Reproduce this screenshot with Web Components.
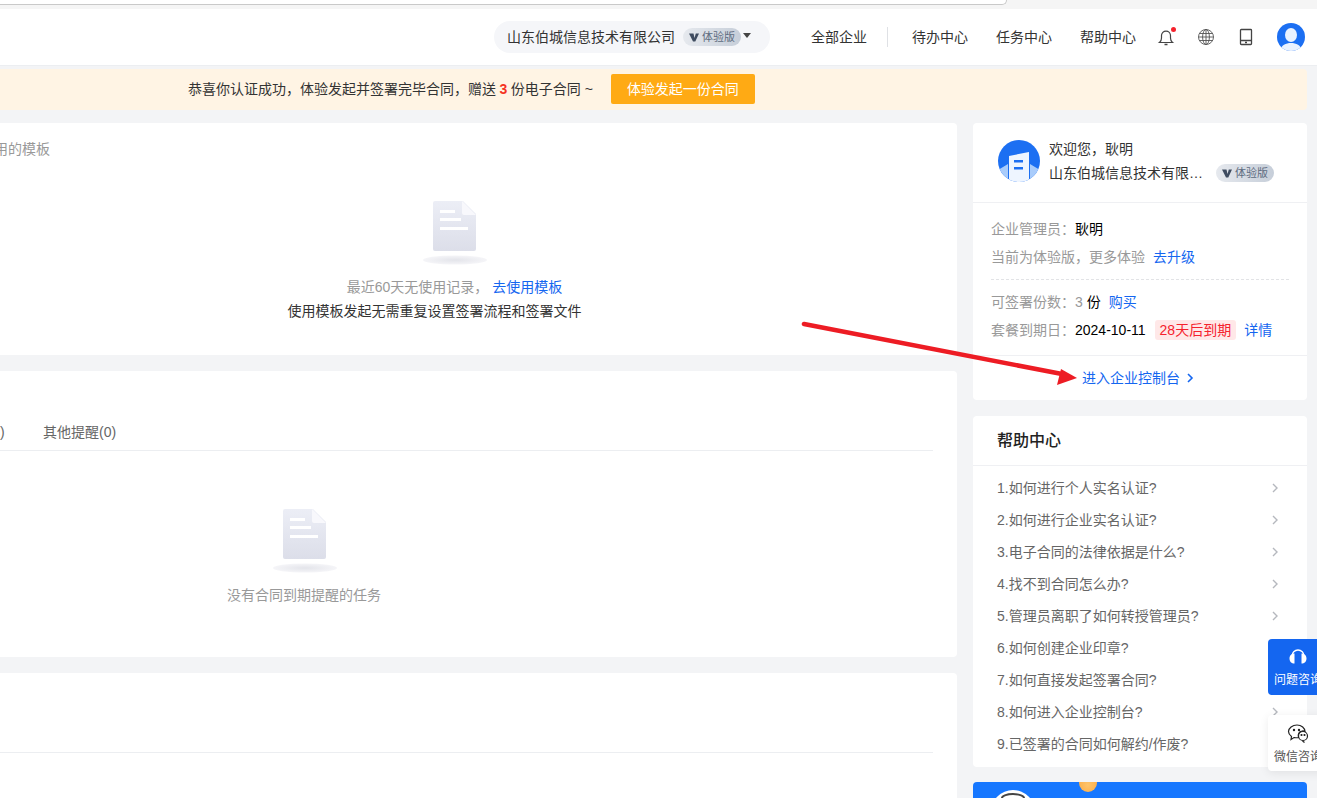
<!DOCTYPE html>
<html lang="zh"><head><meta charset="utf-8"><title>控制台</title>
<style>
html,body{margin:0;height:798px;overflow:hidden;background:#f3f4f6;font:14px/20px "Liberation Sans","Noto Sans CJK SC",sans-serif;color:#333}
.columns{display:grid;grid-template-columns:957px 334px;column-gap:16px;margin-top:13px;height:675px;overflow:hidden}
.col{display:flex;flex-direction:column;gap:16px;min-width:0}
</style></head><body>
<browser-strip></browser-strip>
<top-bar></top-bar>
<promo-banner></promo-banner>
<div class="columns">
  <div class="col">
    <template-card></template-card>
    <remind-card></remind-card>
    <blank-card></blank-card>
  </div>
  <div class="col">
    <account-card></account-card>
    <help-card></help-card>
    <promo-card></promo-card>
  </div>
</div>
<float-actions></float-actions>
<red-arrow></red-arrow>
<script>
const def=(name,html)=>customElements.define(name,class extends HTMLElement{
  constructor(){super();this.attachShadow({mode:'open'}).innerHTML=html}
});
const chevron=(c,w=1.4)=>`<svg width="8" height="10" viewBox="0 0 8 10" fill="none" stroke="${c}" stroke-width="${w}"><path d="M2 1l4 4-4 4"/></svg>`;

def('edition-tag',`<style>
:host{display:inline-flex;align-items:center;justify-content:center;gap:3px;width:58px;height:18px;border-radius:9px;background:linear-gradient(90deg,#e6e9ee,#c6ced9);color:#5d6b80;font-size:11px;line-height:18px;flex:none}
svg{display:block}
</style><svg width="10" height="9" viewBox="0 0 10 9"><path d="M0 .5h4.500L5.500 5 6.800.5H10L6.300 8.600H4z" fill="#3f4c60"/></svg><span>体验版</span>`);

def('browser-strip',`<style>
:host{display:block;height:9px;background:#f5f5f5;overflow:hidden}
div{width:1006px;height:4px;background:#fff;border:solid #c9c9c9;border-width:0 1px 1px 0;border-radius:0 0 10px 0}
</style><div></div>`);

def('top-bar',`<style>
:host{display:flex;align-items:center;height:56px;background:#fff;border-bottom:1px solid #eceef1;box-sizing:content-box;padding-right:12px;justify-content:flex-end;color:#333}
.org{display:flex;align-items:center;width:276px;height:32px;box-sizing:border-box;padding-left:13px;border-radius:16px;background:#f5f6f9;margin-right:41px}
.org edition-tag{margin-left:8px}
.caret{width:0;height:0;border:4px solid transparent;border-top:5px solid #444;border-bottom:0;margin-left:2px;margin-top:-3px}
a{color:#333;text-decoration:none}
.sep{width:1px;height:20px;background:#dfe1e5;margin:0 24px 0 20px}
.nav{margin-right:28px}
.nav.last{margin-right:21px}
.ic{display:flex;width:18px;height:18px;margin-right:22px;position:relative}
.dot{position:absolute;right:-1px;top:-1px;width:5px;height:5px;border-radius:50%;background:#f5222d}
.me{display:block}
</style>
<div class="org"><span>山东伯城信息技术有限公司</span><edition-tag></edition-tag><i class="caret"></i></div>
<a>全部企业</a><i class="sep"></i>
<a class="nav">待办中心</a><a class="nav">任务中心</a><a class="nav last">帮助中心</a>
<span class="ic"><svg width="18" height="18" viewBox="0 0 18 18" fill="none" stroke="#444" stroke-width="1.2"><path d="M2.500 14.500c1.300-1 2-2.300 2-4.500V7.600a4.500 4.500 0 0 1 9 0V10c0 2.200.7 3.500 2 4.500z"/><path d="M7.500 16.500h3" stroke-width="1.500"/></svg><i class="dot"></i></span>
<span class="ic"><svg width="18" height="18" viewBox="0 0 18 18" fill="none" stroke="#555" stroke-width=".9"><circle cx="9" cy="9" r="7.500"/><ellipse cx="9" cy="9" rx="3.400" ry="7.500"/><path d="M9 1.500v15M1.500 9h15M2.600 5.500h12.800M2.600 12.500h12.800"/></svg></span>
<span class="ic"><svg width="18" height="18" viewBox="0 0 18 18" fill="none" stroke="#444" stroke-width="1.3"><rect x="3.500" y="1.500" width="11" height="15" rx=".8"/><path d="M3.500 12.500h11M8 14.500h2"/></svg></span>
<svg class="me" width="28" height="28" viewBox="0 0 28 28"><defs><clipPath id="c"><circle cx="14" cy="14" r="14"/></clipPath></defs><g clip-path="url(#c)"><rect width="28" height="28" fill="#1c6ff2"/><ellipse cx="14" cy="12" rx="6" ry="7" fill="#eaf2ff"/><path d="M3 28c1-6 6-8 11-8s10 2 11 8z" fill="#eaf2ff"/></g></svg>`);

def('promo-banner',`<style>
:host{display:flex;align-items:center;height:41px;margin:3px 10px 0 0;background:#fff4e4;border-radius:0 4px 4px 0;padding:0 0 1px 188px;box-sizing:border-box;color:#333}
b{color:#f5331f;margin:0 3.500px;font-weight:700}
button{all:unset;width:144px;height:30px;margin-left:18px;background:#ffaa14;color:#fff;border-radius:2px;text-align:center;line-height:30px;font-size:14px}
</style><span>恭喜你认证成功，体验发起并签署完毕合同，赠送<b>3</b>份电子合同 ~</span><button>体验发起一份合同</button>`);

const docIcon=`<svg width="64" height="64" viewBox="0 0 64 64" style="display:block"><defs><linearGradient id="g" x1="0" y1="0" x2="0" y2="1"><stop offset="0" stop-color="#eceef6"/><stop offset="1" stop-color="#dcdee9"/></linearGradient><radialGradient id="s"><stop offset="0" stop-color="#e3e4ea"/><stop offset="1" stop-color="#f5f5f8"/></radialGradient></defs><path d="M10 2a2 2 0 0 1 2-2h28l13 13v35a2 2 0 0 1-2 2H12a2 2 0 0 1-2-2z" fill="url(#g)"/><path d="M39 0l14 14H41a2 2 0 0 1-2-2z" fill="#f8f8fc"/><rect x="17" y="9" width="15" height="3" fill="#fff"/><rect x="17" y="17" width="21" height="3" fill="#fff"/><rect x="17" y="26" width="28" height="3" fill="#fff"/><ellipse cx="32" cy="59" rx="32" ry="4.500" fill="url(#s)"/></svg>`;

def('template-card',`<style>
:host{display:block;height:232px;background:#fff;border-radius:0 4px 4px 0;box-sizing:border-box;padding-top:16px;overflow:hidden}
.t{margin-left:-6px;color:#999;white-space:nowrap}
.e{width:869px;display:flex;flex-direction:column;align-items:center;margin-top:42px}
.i{margin-left:40px;margin-bottom:10px}
.l{line-height:24px}
.o{margin-left:40px}
.g{color:#999}.k{color:#1466f0;margin-left:4px}
</style><div class="t">用的模板</div><div class="e"><div class="i">${docIcon}</div><div class="l o"><span class="g">最近60天无使用记录，</span><span class="k">去使用模板</span></div><div class="l">使用模板发起无需重复设置签署流程和签署文件</div></div>`);

def('remind-card',`<style>
:host{display:block;height:286px;background:#fff;border-radius:0 4px 4px 0;box-sizing:border-box;padding:51px 24px 0 0;overflow:hidden}
.tabs{display:flex;height:28px;border-bottom:1px solid #eceef1;color:#666;white-space:nowrap}
.tabs span:first-child{width:43px}
.e{width:608px;display:flex;flex-direction:column;align-items:center;margin-top:58px}
.i{margin-bottom:12px;margin-left:2px}
.g{color:#999;line-height:20px}
</style><div class="tabs"><span>)</span><span>其他提醒(0)</span></div><div class="e"><div class="i">${docIcon}</div><div class="g">没有合同到期提醒的任务</div></div>`);

def('blank-card',`<style>
:host{display:block;height:200px;background:#fff;border-radius:0 4px 4px 0;box-sizing:border-box;padding:79px 24px 0 0}
div{border-bottom:1px solid #eceef1}
</style><div></div>`);

def('account-card',`<style>
:host{display:block;height:277px;background:#fff;border-radius:4px;overflow:hidden}
.h{display:flex;gap:9px;height:80px;box-sizing:border-box;padding:14px 0 0 25px;border-bottom:1px solid #eff0f3}
.h svg{margin-top:3px;flex:none}
.h .n{line-height:24px;width:225px}
.c{display:flex;align-items:center}
.c span{width:167px;white-space:nowrap}
.b{padding:12px 18px 0;height:152px;box-sizing:border-box}
.r{height:28px;line-height:28px;color:#999;display:flex;align-items:center;white-space:nowrap}
.k{color:#000}
.a{color:#1466f0}
.m{margin-left:8px}
.dash{border-top:1px dashed #e2e3e6;margin:8px 0}
.tag{background:#ffe8e8;color:#f5222d;border-radius:3px;height:20px;line-height:20px;padding:0 5px;margin:0 8px 0 9px}
.f{display:flex;align-items:center;gap:6px;height:44px;padding-left:109px;border-top:1px solid #eff0f3;color:#1466f0}
</style>
<div class="h"><svg width="42" height="42" viewBox="0 0 42 42"><defs><clipPath id="a"><circle cx="21" cy="21" r="21"/></clipPath></defs><g clip-path="url(#a)"><rect width="42" height="42" fill="#1c6ff2"/><path d="M0 30l10-6v18H0zM42 30l-10-6v18h10z" fill="#a9ccfb"/><path d="M11 16l20-4v30H11z" fill="#eef5ff"/><rect x="16" y="20" width="9" height="2.500" fill="#1c6ff2"/><rect x="16" y="27" width="9" height="2.500" fill="#1c6ff2"/></g></svg>
<div class="n"><div>欢迎您，耿明</div><div class="c"><span>山东伯城信息技术有限…</span><edition-tag></edition-tag></div></div></div>
<div class="b">
<div class="r">企业管理员：<span class="k">耿明</span></div>
<div class="r">当前为体验版，更多体验<span class="a m">去升级</span></div>
<div class="dash"></div>
<div class="r">可签署份数：3&nbsp;<span class="k">份</span><span class="a m">购买</span></div>
<div class="r">套餐到期日：<span class="k">2024-10-11</span><span class="tag">28天后到期</span><span class="a">详情</span></div>
</div>
<div class="f"><span>进入企业控制台</span>${chevron('#1466f0',1.6)}</div>`);

const q=['1.如何进行个人实名认证?','2.如何进行企业实名认证?','3.电子合同的法律依据是什么?','4.找不到合同怎么办?','5.管理员离职了如何转授管理员?','6.如何创建企业印章?','7.如何直接发起签署合同?','8.如何进入企业控制台?','9.已签署的合同如何解约/作废?'];
def('help-card',`<style>
:host{display:block;height:351px;background:#fff;border-radius:4px;overflow:hidden}
.t{height:49px;line-height:49px;padding-left:24px;font-size:16px;color:#222;border-bottom:1px solid #eff0f3;font-weight:500}
ul{list-style:none;margin:6px 0 0;padding:0 28px 0 24px}
li{display:flex;justify-content:space-between;align-items:center;height:32px;color:#666}
</style><div class="t">帮助中心</div><ul>${q.map(x=>`<li><span>${x}</span>${chevron('#b5b8be')}</li>`).join('')}</ul>`);

def('promo-card',`<style>
:host{display:block;height:80px;margin-top:-1px;background:#1677ff;border-radius:4px 4px 0 0;position:relative;overflow:hidden}
i{position:absolute;border-radius:50%}
.coin{left:106px;top:-8px;width:18px;height:18px;background:radial-gradient(circle at 50% 60%,#ffc46a,#f9a63f)}
.w{left:18px;top:8px;width:44px;height:44px;background:#fff;overflow:hidden}
.w::after{content:"";position:absolute;left:10px;top:3px;width:24px;height:10px;border:2px solid #444;border-radius:50%;box-sizing:border-box}
</style><i class="coin"></i><i class="w"></i>`);

def('float-actions',`<style>
:host{position:absolute;left:1268px;top:639px;width:49px;overflow:hidden;padding:0 0 10px 10px;margin-left:-10px;display:flex;flex-direction:column;gap:20px;font-size:12px;line-height:16px;white-space:nowrap}
div{height:56px;width:60px;border-radius:4px 0 0 4px;box-sizing:border-box;padding:10px 0 0 6px;display:flex;flex-direction:column}
svg{display:block;margin-left:14px;margin-bottom:4px}
.w svg{margin-left:13px;margin-bottom:5px;margin-top:-1px}
.b{background:#1466f0;color:#fff}
.w{background:#fff;color:#555;box-shadow:0 2px 10px rgba(0,0,0,.08)}
</style>
<div class="b"><svg width="20" height="19" viewBox="0 0 20 19" fill="none"><path d="M4 9V7a6 6 0 0 1 12 0v2" stroke="#fff" stroke-width="1.300"/><path d="M6.500 4.500v10C3.500 14.500 1.500 12.500 1.500 9.500S3.500 4.500 6.500 4.500zM13.500 4.500v10c3 0 5-2 5-5s-2-5-5-5z" fill="#fff"/></svg><span>问题咨询</span></div>
<div class="w"><svg width="22" height="20" viewBox="0 0 22 20" fill="none" stroke="#222" stroke-width="1.200"><path d="M10 1c4.500 0 8 3 8 6.500a3 3 0 0 0-3-.5c-3 .5-4.500 3.500-3.500 6.500-1.500.5-3 .2-4.500 0L4 15.500l.5-3C2.500 11 1.500 9.300 1.500 7.500 1.500 4 5.500 1 10 1z"/><circle cx="16" cy="12" r="4.500"/><path d="M15.500 17l2 1.500"/><circle cx="7" cy="6" r=".6" fill="#222"/><circle cx="12" cy="6" r=".6" fill="#222"/><circle cx="14.500" cy="11" r=".5" fill="#222"/><circle cx="17.500" cy="11" r=".5" fill="#222"/></svg><span>微信咨询</span></div>`);

def('red-arrow',`<style>
:host{position:absolute;left:800px;top:316px;width:280px;height:70px;pointer-events:none}
svg{display:block}
</style><svg width="280" height="70" viewBox="0 0 280 70"><path d="M4 8L262 58" stroke="#ed1c24" stroke-width="4.600" stroke-linecap="round"/><path d="M277 62L261 53l-4 16z" fill="#ed1c24"/></svg>`);
</script>
</body></html>
